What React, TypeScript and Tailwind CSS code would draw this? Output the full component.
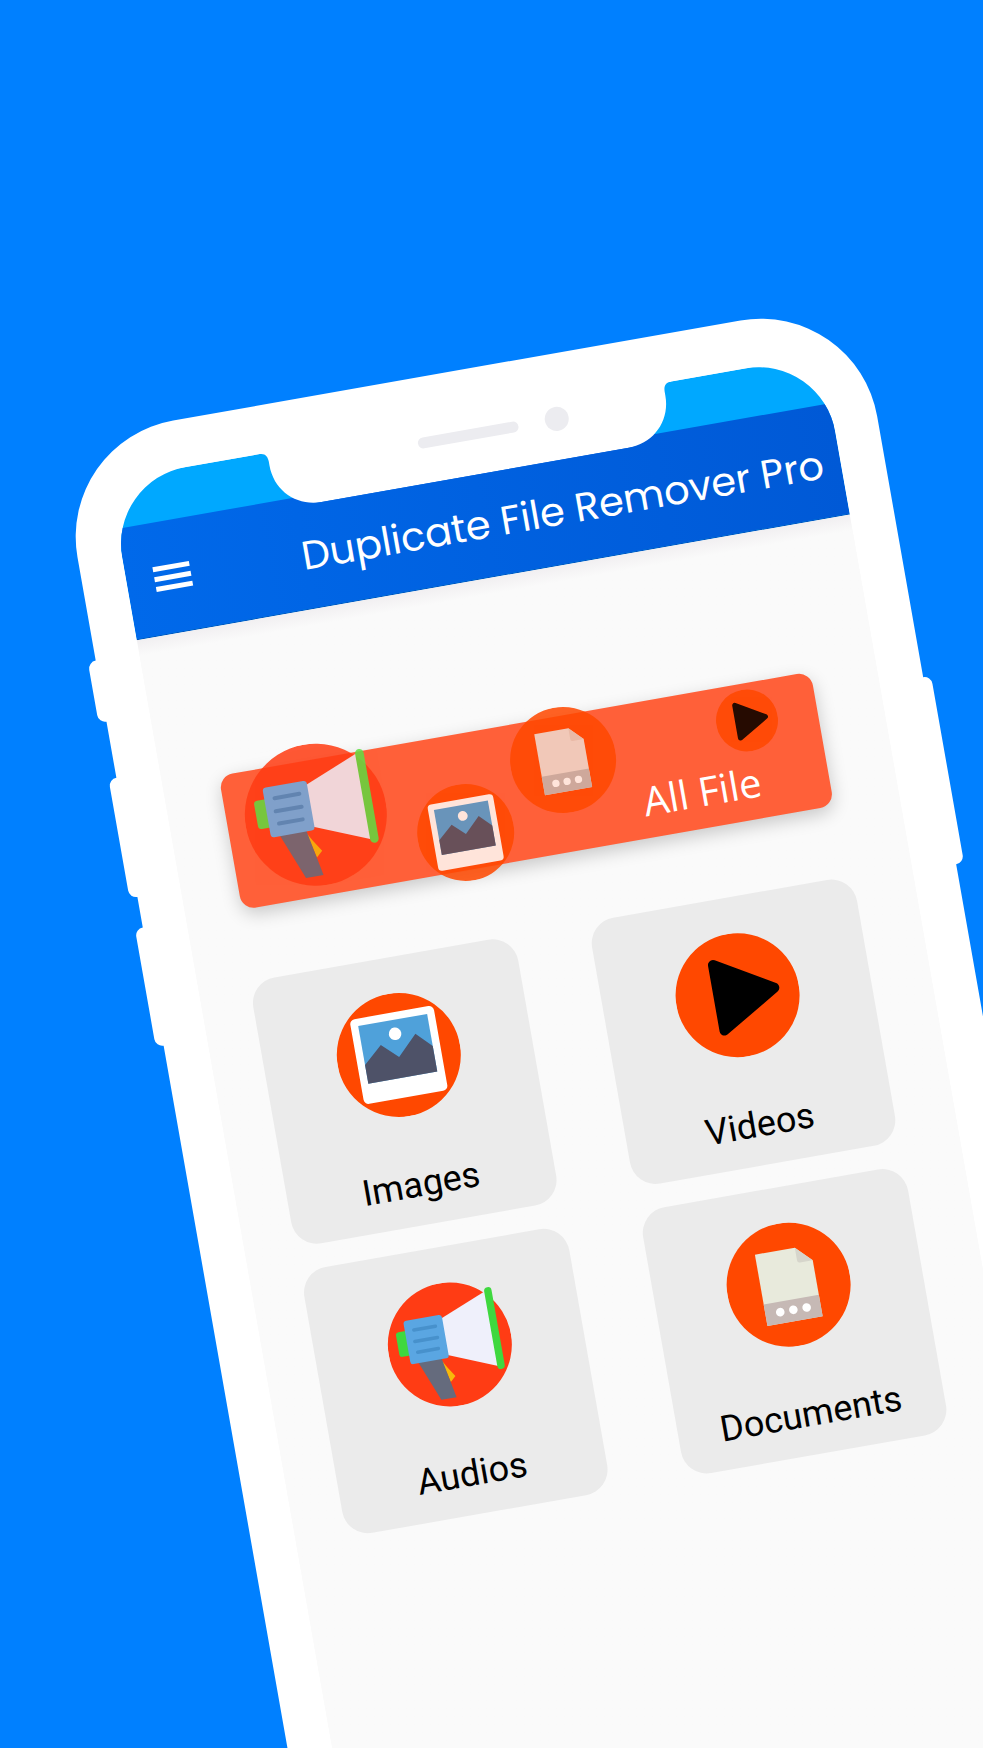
import type { ReactNode } from "react";

type IconProps = { className: string; faded?: boolean };

function IconBase({ color, className, faded, children }: IconProps & { color: string; children: ReactNode }) {
  return (
    <svg viewBox="0 0 124 124" className={className} aria-hidden="true">
      <circle cx="62" cy="62" r="62" fill={color} opacity={faded ? 0.86 : 1} />
      <g opacity={faded ? 0.85 : 1}>{children}</g>
    </svg>
  );
}

function ImageIcon(props: IconProps) {
  return (
    <IconBase color="#ff4800" {...props}>
      <rect x="19.5" y="19" width="85" height="86" rx="5" fill="#fff" />
      <rect x="27" y="26.5" width="70" height="58.5" fill="#4fa1da" />
      <circle cx="62" cy="40.5" r="6.3" fill="#fff" />
      <path d="M27 66 46 49 62 64 82 44 97 59V85H27Z" fill="#4e5268" />
    </IconBase>
  );
}

function PlayIcon(props: IconProps) {
  return (
    <IconBase color="#ff4800" {...props}>
      <path d="M43 28V94.500L99.500 61Z" fill="#000" stroke="#000" strokeWidth="10" strokeLinejoin="round" />
    </IconBase>
  );
}

function AudioIcon(props: IconProps) {
  return (
    <IconBase color="#ff3c14" {...props}>
      <rect x="10.500" y="41" width="16" height="25" rx="3" fill={props.faded ? "#60df45" : "#3fd83f"} />
      <path d="M51 76 55.500 84 62 94 56.500 99Z" fill="#f7b90b" />
      <path d="M27 72H51L59.500 115H44Z" fill="#656b7d" />
      <path d="M58 35 107 15V92L58 72Z" fill="#eff0fb" />
      <rect x="20" y="31" width="39" height="44" rx="3" fill={props.faded ? "#6ab2ea" : "#5aa6e2"} />
      <path d="M29 41.500H51M28 53H51M29 64H50" stroke="#4791cc" strokeWidth="3.500" strokeLinecap="round" />
      <rect x="105" y="12" width="7.500" height="83" rx="3.700" fill={props.faded ? "#60df45" : "#3fd83f"} />
    </IconBase>
  );
}

function DocumentIcon(props: IconProps) {
  return (
    <IconBase color="#ff4800" {...props}>
      <path d="M34 26.500H74.500L90 42V99H34Z" fill={props.faded ? "#efdfd7" : "#e8eadc"} />
      <path d="M74.500 26.500 90 42H77Q74.500 42 74.500 39.500Z" fill={props.faded ? "#e6cdc2" : "#d6d5cb"} />
      <rect x="34" y="77" width="56" height="22" fill="#c6b9b5" />
      <circle cx="49" cy="87.500" r="4.300" fill="#fff" />
      <circle cx="62.300" cy="87.500" r="4.300" fill="#fff" />
      <circle cx="75.800" cy="87.500" r="4.300" fill="#fff" />
    </IconBase>
  );
}

function Notch() {
  return (
    <div className="absolute left-1/2 top-[44px] h-[62px] w-[418px] -translate-x-1/2">
      <svg viewBox="0 0 418 62" className="block h-full w-full" aria-hidden="true">
        <path d="M0 0V4C6 4 8 8 8 13V17C8 43 28 62 53 62H365C390 62 410 43 410 17V13C410 8 412 4 418 4V0Z" fill="#fff" />
      </svg>
      <div className="absolute inset-x-0 top-[9px] flex items-center justify-center gap-[27px] pl-[51px]">
        <span className="h-[11px] w-[102px] rounded-full bg-[#ececf0]" />
        <span className="size-6 rounded-full bg-[#ececf0]" />
      </div>
    </div>
  );
}

const categories = [
  { label: "Images", Icon: ImageIcon },
  { label: "Videos", Icon: PlayIcon },
  { label: "Audios", Icon: AudioIcon },
  { label: "Documents", Icon: DocumentIcon },
];

export default function App() {
  return (
    <main className="h-screen overflow-hidden bg-[#0080ff] pl-[57px] pt-[441px]">
      <div className="relative w-[812px] origin-top-left -rotate-10">
        <span className="absolute -left-2 top-[223px] h-[62px] w-5 rounded-lg bg-white" />
        <span className="absolute -left-2 top-[342px] h-[121px] w-5 rounded-lg bg-white" />
        <span className="absolute -left-2 top-[494px] h-[120px] w-5 rounded-lg bg-white" />
        <span className="absolute -right-2 top-[383px] h-[190px] w-5 rounded-lg bg-white" />

        <div className="relative rounded-[118px] bg-white px-11 py-12">
          <div className="overflow-hidden rounded-[78px] bg-[#fafafa]">
            <div className="bg-[#00a8ff] pt-[49px]">
              <header className="flex h-[113px] items-center gap-[112px] border-b border-[#0050bd] bg-linear-to-r from-[#0069ea] to-[#0059d6] pl-[28px]">
                <button type="button" aria-label="Open menu" className="flex w-[37px] shrink-0 flex-col gap-[5px]">
                  <span className="h-[5px] bg-white" />
                  <span className="h-[5px] bg-white" />
                  <span className="h-[5px] bg-white" />
                </button>
                <h1 className="whitespace-nowrap pt-1.5 font-['Poppins',Inter,sans-serif] text-[40px] leading-none text-white">
                  Duplicate File Remover Pro
                </h1>
              </header>
            </div>

            <div className="bg-linear-to-b from-[#f1eff1] to-[#fafafa] to-[16px] pb-[500px] pl-[51px] pr-[60px] pt-[148px]">
              <button
                type="button"
                className="relative ml-[6px] flex h-[136px] w-[601px] items-end justify-end rounded-[14px] bg-[#ff6039] pb-2.5 pr-[68px] shadow-[0_6px_18px_rgba(0,0,0,0.2)]"
              >
                <AudioIcon faded className="absolute left-[18px] -top-[16px] size-[142px]" />
                <ImageIcon faded className="absolute left-[185px] top-[50px] size-[97px]" />
                <DocumentIcon faded className="absolute left-[289px] -top-[9px] size-[106px]" />
                <PlayIcon faded className="absolute left-[499px] top-[6px] size-[62px]" />
                <span className="font-['Open_Sans',sans-serif] text-[40px] leading-[54px] text-white">All File</span>
              </button>

              <div className="mt-[72px] grid grid-cols-2 gap-x-[75px] gap-y-6">
                {categories.map(({ label, Icon }) => (
                  <button
                    key={label}
                    type="button"
                    className="flex flex-col items-center gap-[45px] rounded-[26px] bg-[#ebebeb] pb-[17px] pt-[36px]"
                  >
                    <Icon className="size-[124px]" />
                    <span className="font-[Roboto,sans-serif] text-[36px] leading-[48px] text-black">{label}</span>
                  </button>
                ))}
              </div>
            </div>
          </div>
          <Notch />
        </div>
      </div>
    </main>
  );
}
